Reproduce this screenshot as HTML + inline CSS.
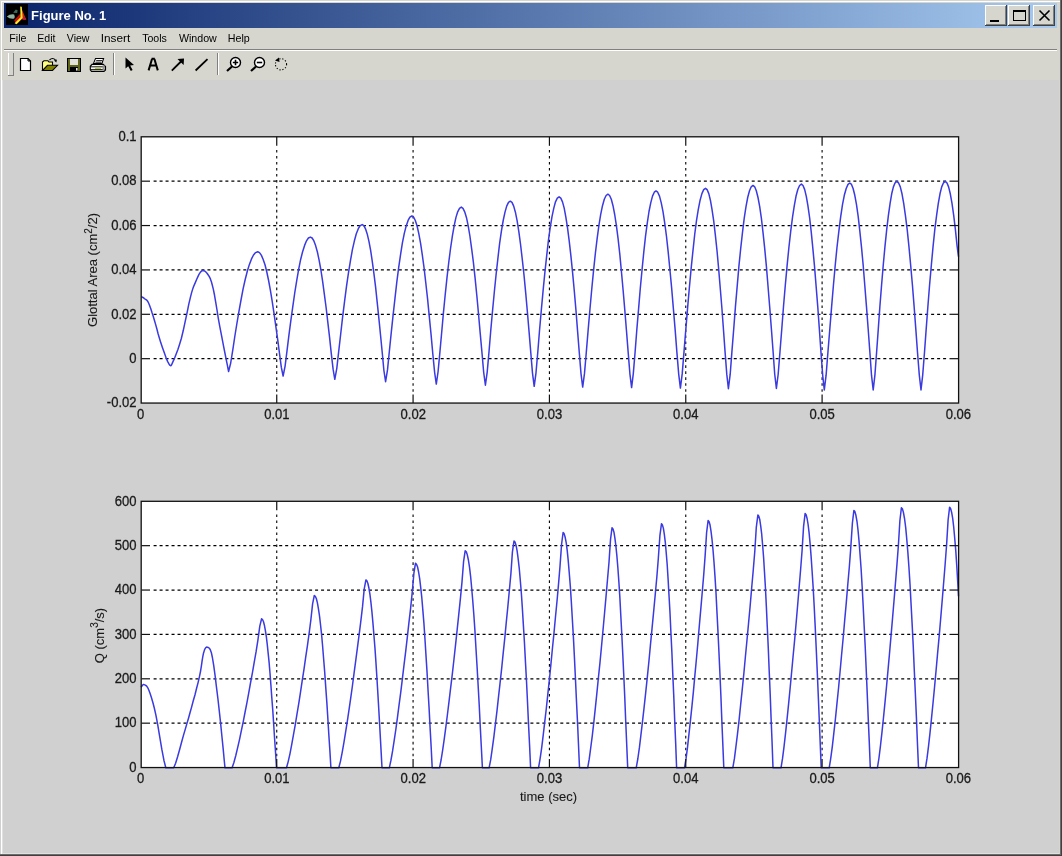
<!DOCTYPE html>
<html><head><meta charset="utf-8"><style>
html,body{margin:0;padding:0;width:1062px;height:856px;overflow:hidden;background:#d0d0d0}
svg{display:block;will-change:transform}
text{font-family:"Liberation Sans",sans-serif}
.tx text{font-size:13px;fill:#1a1a1a;stroke:#1a1a1a;stroke-width:0.1}
.tx text.d{font-size:14.5px;fill:#1a1a1a;stroke:#1a1a1a;stroke-width:0.3}
.g{stroke:#000;stroke-width:1.1;stroke-dasharray:2.6 3.381}
.gh{stroke:#000;stroke-width:1.15;stroke-dasharray:3 2.981}
.k{stroke:#111;stroke-width:1.2}
.box{fill:none;stroke:#111;stroke-width:1.3}
.ln{fill:none;stroke:#3a3ae0;stroke-width:1.5;stroke-linejoin:round}
</style></head><body>
<svg width="1062" height="856" viewBox="0 0 1062 856">
<rect x="0" y="0" width="1062" height="856" fill="#d6d6ce"/><rect x="1" y="1" width="1059" height="853" fill="#ffffff"/><rect x="2" y="2" width="1058" height="852" fill="#d6d6ce"/><rect x="0" y="854" width="1062" height="1" fill="#6c6c6c"/><rect x="0" y="855" width="1062" height="1" fill="#404040"/><rect x="1060" y="0" width="1" height="855" fill="#6c6c6c"/><rect x="1061" y="0" width="1" height="856" fill="#404040"/><defs><linearGradient id="tg" x1="0" x2="1" y1="0" y2="0"><stop offset="0" stop-color="#0a246a"/><stop offset="1" stop-color="#a6caf0"/></linearGradient></defs><rect x="4" y="3" width="1053" height="25" fill="url(#tg)"/><rect x="6" y="4" width="22" height="21" fill="#000"/><path d="M6.8 16.6 Q10 13.6 14.2 14.4 Q15.2 16.5 14.2 18.6 Q10 19.4 6.8 16.6 Z" fill="#8db3a0"/><path d="M13.2 12.8 L15.8 9.6 L17.6 10.2 L17.2 13 Z" fill="#3f6a58"/><polygon points="14.2,20.2 20.6,13.2 21.8,19.2 16.2,24" fill="#c41200"/><polygon points="21.2,8 26.2,19.4 22.2,19.6" fill="#d83000"/><polygon points="23.6,15.6 26.4,19.8 23.2,20" fill="#b01850"/><path d="M20.2 6.4 L21.8 6.8 L22.6 18 L16.6 24.2 L14.6 23.2 L20.6 17.2 Z" fill="#ffe82a"/><text x="31.1" y="19.6" font-size="13" font-weight="bold" fill="#fff" class="ui">Figure No. 1</text><rect x="985" y="5" width="22" height="21" fill="#404040"/><rect x="985" y="5" width="21" height="20" fill="#fff"/><rect x="986" y="6" width="20" height="19" fill="#808080"/><rect x="986" y="6" width="19" height="18" fill="#d6d6ce"/><rect x="1008" y="5" width="22" height="21" fill="#404040"/><rect x="1008" y="5" width="21" height="20" fill="#fff"/><rect x="1009" y="6" width="20" height="19" fill="#808080"/><rect x="1009" y="6" width="19" height="18" fill="#d6d6ce"/><rect x="1033" y="5" width="22" height="21" fill="#404040"/><rect x="1033" y="5" width="21" height="20" fill="#fff"/><rect x="1034" y="6" width="20" height="19" fill="#808080"/><rect x="1034" y="6" width="19" height="18" fill="#d6d6ce"/><rect x="990" y="20" width="9" height="2" fill="#000"/><rect x="1013.5" y="10.5" width="12" height="10" fill="none" stroke="#000" stroke-width="1"/><rect x="1013" y="10" width="13" height="2" fill="#000"/><path d="M1039.5 10.5 L1049.5 20.5 M1049.5 10.5 L1039.5 20.5" stroke="#000" stroke-width="1.6"/><text x="9.3" y="41.8" font-size="11" fill="#000" class="ui" textLength="17.2" lengthAdjust="spacingAndGlyphs">File</text><text x="37.3" y="41.8" font-size="11" fill="#000" class="ui" textLength="18.2" lengthAdjust="spacingAndGlyphs">Edit</text><text x="66.8" y="41.8" font-size="11" fill="#000" class="ui" textLength="22.7" lengthAdjust="spacingAndGlyphs">View</text><text x="100.7" y="41.8" font-size="11" fill="#000" class="ui" textLength="29.5" lengthAdjust="spacingAndGlyphs">Insert</text><text x="142.2" y="41.8" font-size="11" fill="#000" class="ui" textLength="24.7" lengthAdjust="spacingAndGlyphs">Tools</text><text x="178.9" y="41.8" font-size="11" fill="#000" class="ui" textLength="37.9" lengthAdjust="spacingAndGlyphs">Window</text><text x="227.8" y="41.8" font-size="11" fill="#000" class="ui" textLength="22.0" lengthAdjust="spacingAndGlyphs">Help</text><rect x="4" y="49" width="1053" height="1" fill="#808080"/><rect x="4" y="50" width="1053" height="1" fill="#ffffff"/><rect x="8" y="53" width="1" height="22" fill="#fff"/><rect x="9" y="53" width="4" height="22" fill="#d6d6ce"/><rect x="13" y="53" width="1" height="22" fill="#808080"/><rect x="8" y="75" width="6" height="1" fill="#808080"/><rect x="113" y="53" width="1" height="22" fill="#808080"/><rect x="114" y="53" width="1" height="22" fill="#fff"/><rect x="217" y="53" width="1" height="22" fill="#808080"/><rect x="218" y="53" width="1" height="22" fill="#fff"/><path d="M20.5 58.5 H28 L30.5 61 V70.5 H20.5 Z" fill="#fff" stroke="#000" stroke-width="1.2"/><path d="M28 58.5 V61 H30.5" fill="none" stroke="#000" stroke-width="1"/><path d="M42.5 70.5 V62 L44 60.8 H48 L49 62 H52.5 V65.2" fill="#ffff80" stroke="#000" stroke-width="1.1"/><path d="M42.5 70.5 L47.5 65.3 H57.5 L52.5 70.5 Z" fill="#808000" stroke="#000" stroke-width="1.1"/><path d="M49.5 60 Q52.5 57 55.5 60" fill="none" stroke="#000" stroke-width="1.1"/><path d="M54 60.5 L57 59.5 L56.3 62.5 Z" fill="#000"/><rect x="67" y="58" width="14" height="14" fill="#000"/><rect x="68" y="59" width="12" height="12" fill="#5e6418"/><rect x="70" y="59" width="8" height="6" fill="#e2e2da"/><rect x="70" y="67" width="8" height="4" fill="#000"/><rect x="76" y="68" width="1.6" height="2.6" fill="#e8e8e8"/><path d="M95.5 58.5 H103.6 L101.9 63.6 H93.4 Z" fill="#fff" stroke="#000" stroke-width="1.05"/><path d="M96.2 60.6 H102.2 M95.4 62.2 H101.4" stroke="#000" stroke-width="0.9"/><path d="M92 64.3 H103.2 L105.5 66.4 V70 L104 71.3 H91.5 L90.3 69.8 V66.3 Z" fill="#f4f4ee" stroke="#000" stroke-width="1.15"/><path d="M90.8 66.8 H104.8 M90.8 69.6 H104.8" stroke="#000" stroke-width="0.9"/><rect x="95" y="67.6" width="6" height="1.3" fill="#a8c040"/><rect x="102.6" y="65.2" width="2" height="5.2" fill="#909090"/><path d="M125.5 57.5 L125.5 68.5 L128.2 66.2 L130.8 71 L132.6 70 L130.2 65.4 L134 65 Z" fill="#000"/><path d="M148.6 70.4 L152 59 M157.8 70.4 L154.4 59 M151.6 58.8 H154.8 M150 65.4 H156.6" stroke="#000" stroke-width="2" fill="none"/><path d="M171.8 70.6 L182 60.5" stroke="#000" stroke-width="1.8"/><path d="M184 58.5 L183.6 65 L177.5 59 Z" fill="#000"/><path d="M195.6 70.5 L207.5 59.2" stroke="#000" stroke-width="1.8"/><circle cx="235.5" cy="62.5" r="5" fill="#fff" stroke="#000" stroke-width="1.4"/><path d="M232 66.5 L227 71" stroke="#000" stroke-width="2.2"/><path d="M232.8 62.5 H238.2 M235.5 59.8 V65.2" stroke="#000" stroke-width="1.6"/><circle cx="259.5" cy="62.5" r="5" fill="#fff" stroke="#000" stroke-width="1.4"/><path d="M256 66.5 L251 71" stroke="#000" stroke-width="2.2"/><path d="M256.8 62.5 H262.2" stroke="#000" stroke-width="1.6"/><circle cx="281" cy="64.3" r="5.6" fill="none" stroke="#000" stroke-width="1.1" stroke-dasharray="1.2 1.8"/><path d="M275 60.5 L279 57.5 L279.5 62 Z" fill="#000"/><rect x="0" y="80" width="1" height="774" fill="#d0d0d0"/><rect x="2" y="80" width="1057" height="774" fill="#e0e0e0"/><rect x="3" y="80" width="1056" height="773" fill="#d0d0d0"/>
<rect x="141" y="137" width="817" height="266" fill="#fff"/><rect x="141" y="501" width="817" height="266" fill="#fff"/><line x1="276.74" y1="150.00" x2="276.74" y2="395" class="g"/><line x1="413.08" y1="150.00" x2="413.08" y2="395" class="g"/><line x1="549.42" y1="150.00" x2="549.42" y2="395" class="g"/><line x1="685.76" y1="150.00" x2="685.76" y2="395" class="g"/><line x1="822.10" y1="150.00" x2="822.10" y2="395" class="g"/><line x1="153.60" y1="181.18" x2="949" y2="181.18" class="gh"/><line x1="153.60" y1="225.55" x2="949" y2="225.55" class="gh"/><line x1="153.60" y1="269.93" x2="949" y2="269.93" class="gh"/><line x1="153.60" y1="314.30" x2="949" y2="314.30" class="gh"/><line x1="153.60" y1="358.68" x2="949" y2="358.68" class="gh"/><line x1="276.74" y1="514.50" x2="276.74" y2="759" class="g"/><line x1="413.08" y1="514.50" x2="413.08" y2="759" class="g"/><line x1="549.42" y1="514.50" x2="549.42" y2="759" class="g"/><line x1="685.76" y1="514.50" x2="685.76" y2="759" class="g"/><line x1="822.10" y1="514.50" x2="822.10" y2="759" class="g"/><line x1="153.60" y1="545.67" x2="949" y2="545.67" class="gh"/><line x1="153.60" y1="590.05" x2="949" y2="590.05" class="gh"/><line x1="153.60" y1="634.42" x2="949" y2="634.42" class="gh"/><line x1="153.60" y1="678.80" x2="949" y2="678.80" class="gh"/><line x1="153.60" y1="723.17" x2="949" y2="723.17" class="gh"/><path d="M141.3 296.5 L141.7 296.7 L142.3 297.1 L143.0 297.5 L143.8 298.0 L144.5 298.6 L145.2 299.1 L146.0 299.6 L146.8 300.2 L147.7 301.3 L148.6 303.0 L149.6 305.5 L150.8 308.7 L151.9 312.3 L153.2 316.2 L154.4 320.2 L155.6 324.4 L156.9 329.0 L158.1 333.8 L159.5 338.5 L160.9 343.1 L162.5 347.8 L164.3 352.8 L166.0 357.6 L167.7 361.6 L169.1 364.2 L170.1 365.4 L170.8 365.7 L171.5 364.9 L172.2 363.4 L173.2 361.1 L174.6 358.1 L176.1 354.2 L177.9 349.6 L179.6 344.2 L181.4 338.2 L183.2 330.8 L185.1 321.9 L187.1 312.6 L188.8 304.1 L190.4 297.3 L191.6 292.6 L192.6 289.4 L193.4 287.0 L194.3 284.9 L195.3 282.6 L196.5 279.8 L197.8 276.9 L199.1 274.2 L200.5 272.1 L201.8 270.8 L203.1 270.5 L204.5 270.9 L205.9 272.0 L207.2 273.5 L208.4 275.2 L209.5 277.0 L210.4 278.9 L211.3 281.4 L212.2 284.7 L213.3 289.1 L214.5 295.0 L215.7 302.1 L217.0 310.0 L218.3 318.3 L219.8 326.7 L221.6 335.9 L223.6 346.3 L225.6 356.5 L227.4 365.3 L228.6 371.5 L230.7 363.0 L232.8 349.8 L234.8 336.5 L236.9 323.5 L239.0 311.1 L241.1 299.5 L243.1 288.9 L245.2 279.5 L247.3 271.2 L249.4 264.4 L251.5 258.9 L253.5 255.0 L255.6 252.6 L257.7 251.8 L259.5 252.6 L261.3 255.1 L263.1 259.2 L265.0 264.8 L266.8 272.0 L268.6 280.5 L270.4 290.3 L272.2 301.3 L274.0 313.3 L275.8 326.1 L277.7 339.6 L279.5 353.5 L281.3 367.2 L283.1 376.0 L285.1 366.1 L287.0 350.9 L288.9 335.3 L290.9 320.2 L292.9 305.9 L294.8 292.5 L296.8 280.2 L298.7 269.2 L300.6 259.7 L302.6 251.7 L304.6 245.4 L306.5 240.8 L308.4 238.0 L310.4 237.1 L312.1 238.0 L313.9 240.9 L315.6 245.6 L317.4 252.0 L319.1 260.2 L320.9 270.0 L322.6 281.2 L324.3 293.8 L326.1 307.5 L327.8 322.2 L329.6 337.7 L331.3 353.6 L333.1 369.2 L334.8 379.3 L336.8 368.3 L338.7 351.3 L340.7 334.0 L342.6 317.2 L344.6 301.2 L346.5 286.3 L348.5 272.6 L350.5 260.4 L352.4 249.7 L354.4 240.8 L356.3 233.8 L358.3 228.7 L360.2 225.6 L362.2 224.6 L363.9 225.6 L365.5 228.8 L367.2 233.9 L368.9 241.1 L370.6 250.1 L372.2 260.9 L373.9 273.3 L375.6 287.2 L377.2 302.4 L378.9 318.6 L380.6 335.7 L382.3 353.3 L383.9 370.5 L385.6 381.7 L387.5 369.9 L389.3 351.7 L391.2 333.2 L393.1 315.2 L395.0 298.1 L396.8 282.1 L398.7 267.4 L400.6 254.3 L402.4 242.9 L404.3 233.4 L406.2 225.9 L408.1 220.4 L409.9 217.1 L411.8 216.0 L413.6 217.1 L415.3 220.5 L417.1 226.0 L418.8 233.6 L420.6 243.3 L422.3 254.9 L424.1 268.1 L425.8 283.0 L427.6 299.2 L429.3 316.6 L431.1 334.9 L432.8 353.7 L434.6 372.1 L436.3 384.1 L438.1 371.5 L439.9 352.1 L441.7 332.3 L443.4 313.1 L445.2 294.8 L447.0 277.7 L448.8 262.0 L450.6 248.0 L452.4 235.8 L454.2 225.7 L455.9 217.6 L457.7 211.8 L459.5 208.3 L461.3 207.1 L463.0 208.3 L464.7 211.8 L466.5 217.7 L468.2 225.8 L469.9 236.0 L471.6 248.3 L473.4 262.3 L475.1 278.1 L476.8 295.3 L478.5 313.7 L480.2 333.1 L482.0 353.0 L483.7 372.5 L485.4 385.2 L487.2 372.1 L489.0 351.9 L490.7 331.3 L492.5 311.3 L494.3 292.3 L496.1 274.5 L497.9 258.3 L499.6 243.7 L501.4 231.1 L503.2 220.5 L505.0 212.1 L506.7 206.1 L508.5 202.4 L510.3 201.2 L512.0 202.4 L513.7 206.1 L515.4 212.2 L517.1 220.6 L518.8 231.3 L520.5 244.0 L522.2 258.6 L524.0 275.0 L525.7 292.9 L527.4 312.0 L529.1 332.1 L530.8 352.8 L532.5 373.1 L534.2 386.3 L536.0 372.8 L537.8 352.0 L539.5 330.8 L541.3 310.2 L543.1 290.6 L544.9 272.3 L546.7 255.6 L548.4 240.6 L550.2 227.6 L552.0 216.7 L553.8 208.1 L555.5 201.8 L557.3 198.1 L559.1 196.8 L560.8 198.1 L562.5 201.9 L564.2 208.1 L565.8 216.8 L567.5 227.7 L569.2 240.8 L570.9 255.8 L572.6 272.7 L574.3 291.0 L576.0 310.7 L577.6 331.4 L579.3 352.7 L581.0 373.6 L582.7 387.1 L584.5 373.4 L586.3 352.2 L588.1 330.6 L589.9 309.7 L591.7 289.7 L593.5 271.1 L595.3 254.0 L597.1 238.8 L598.9 225.5 L600.7 214.4 L602.5 205.7 L604.3 199.3 L606.1 195.5 L607.9 194.2 L609.6 195.5 L611.3 199.3 L613.0 205.7 L614.7 214.5 L616.4 225.6 L618.1 238.9 L619.8 254.2 L621.4 271.3 L623.1 290.0 L624.8 310.0 L626.5 331.0 L628.2 352.6 L629.9 373.8 L631.6 387.6 L633.3 373.6 L635.1 352.0 L636.8 330.0 L638.6 308.6 L640.3 288.3 L642.1 269.3 L643.8 251.9 L645.5 236.4 L647.3 222.8 L649.0 211.5 L650.8 202.6 L652.5 196.1 L654.3 192.2 L656.0 190.9 L657.7 192.2 L659.5 196.1 L661.2 202.6 L663.0 211.6 L664.7 222.9 L666.5 236.5 L668.2 252.1 L669.9 269.5 L671.7 288.6 L673.4 308.9 L675.2 330.4 L676.9 352.4 L678.7 374.1 L680.4 388.1 L682.2 373.9 L684.0 351.9 L685.8 329.6 L687.6 307.9 L689.4 287.2 L691.2 267.9 L693.0 250.3 L694.7 234.5 L696.5 220.7 L698.3 209.3 L700.1 200.2 L701.9 193.6 L703.7 189.6 L705.5 188.3 L707.1 189.6 L708.8 193.6 L710.4 200.2 L712.0 209.3 L713.7 220.8 L715.3 234.6 L717.0 250.5 L718.6 268.2 L720.2 287.5 L721.9 308.3 L723.5 330.0 L725.1 352.4 L726.8 374.4 L728.4 388.7 L730.2 374.2 L731.9 351.9 L733.7 329.2 L735.4 307.1 L737.2 286.1 L738.9 266.4 L740.7 248.5 L742.5 232.4 L744.2 218.4 L746.0 206.7 L747.7 197.5 L749.5 190.8 L751.2 186.8 L753.0 185.4 L754.7 186.8 L756.3 190.8 L758.0 197.5 L759.7 206.7 L761.4 218.4 L763.0 232.3 L764.7 248.4 L766.4 266.4 L768.0 286.0 L769.7 307.0 L771.4 329.0 L773.1 351.7 L774.7 374.0 L776.4 388.5 L778.2 374.0 L780.0 351.5 L781.8 328.7 L783.5 306.5 L785.3 285.3 L787.1 265.6 L788.9 247.5 L790.7 231.3 L792.5 217.3 L794.3 205.6 L796.0 196.3 L797.8 189.5 L799.6 185.5 L801.4 184.1 L803.0 185.5 L804.7 189.6 L806.3 196.3 L807.9 205.7 L809.6 217.5 L811.2 231.7 L812.8 247.9 L814.5 266.1 L816.1 286.0 L817.8 307.3 L819.4 329.7 L821.0 352.6 L822.7 375.3 L824.3 389.9 L826.1 375.2 L827.9 352.5 L829.8 329.3 L831.6 306.9 L833.4 285.5 L835.2 265.5 L837.0 247.2 L838.9 230.8 L840.7 216.6 L842.5 204.7 L844.3 195.3 L846.2 188.5 L848.0 184.4 L849.8 183.0 L851.5 184.4 L853.1 188.5 L854.8 195.3 L856.5 204.7 L858.2 216.6 L859.8 230.8 L861.5 247.2 L863.2 265.5 L864.8 285.5 L866.5 306.9 L868.2 329.3 L869.9 352.5 L871.5 375.2 L873.2 389.9 L874.9 375.1 L876.6 352.2 L878.3 328.9 L879.9 306.2 L881.6 284.7 L883.3 264.5 L885.0 246.1 L886.7 229.6 L888.4 215.3 L890.1 203.3 L891.7 193.8 L893.4 186.9 L895.1 182.8 L896.8 181.4 L898.5 182.8 L900.3 186.9 L902.0 193.8 L903.7 203.3 L905.4 215.3 L907.2 229.6 L908.9 246.1 L910.6 264.5 L912.4 284.7 L914.1 306.2 L915.8 328.9 L917.5 352.2 L919.3 375.1 L921.0 389.9 L922.7 375.1 L924.5 352.2 L926.2 328.9 L927.9 306.2 L929.6 284.7 L931.4 264.5 L933.1 246.1 L934.8 229.6 L936.6 215.3 L938.3 203.3 L940.0 193.8 L941.7 186.9 L943.5 182.8 L945.2 181.4 L946.9 182.8 L948.6 186.9 L950.3 193.8 L952.0 203.3 L953.7 215.3 L955.4 229.6 L957.1 246.1 L958.5 256.7" class="ln"/><path d="M141.0 687.3 L141.4 686.8 L141.9 686.0 L142.5 685.2 L143.2 684.6 L144.0 684.6 L144.8 684.9 L145.7 685.4 L146.7 686.2 L147.8 687.8 L148.9 690.3 L150.1 693.6 L151.4 697.5 L152.8 702.3 L154.3 708.0 L155.9 715.1 L157.7 724.7 L159.7 736.7 L161.8 749.2 L163.9 760.2 L165.8 767.8 L167.5 767.8 L169.0 767.8 L170.5 767.8 L172.0 767.8 L173.7 767.8 L175.6 763.2 L177.6 756.8 L179.7 749.3 L181.7 741.7 L183.6 734.9 L185.3 729.1 L186.9 723.6 L188.5 718.2 L190.0 712.8 L191.6 707.1 L193.2 701.0 L195.0 694.7 L196.6 688.3 L198.2 682.1 L199.5 676.4 L200.6 671.0 L201.4 665.8 L202.1 660.9 L202.8 656.6 L203.5 653.2 L204.3 650.6 L205.0 648.8 L205.8 647.6 L206.6 647.1 L207.4 647.2 L208.3 647.5 L209.2 648.1 L210.2 649.5 L211.3 652.4 L212.4 657.5 L213.7 665.4 L215.1 675.7 L216.5 687.4 L218.0 699.5 L219.3 711.1 L220.6 723.1 L221.9 736.3 L223.2 749.1 L224.2 760.0 L225.0 767.8 L232.1 767.8 L233.9 762.5 L235.8 755.5 L237.6 747.8 L239.5 739.6 L241.3 730.9 L243.2 721.9 L245.0 712.5 L246.9 702.9 L248.7 693.1 L250.5 683.0 L252.4 672.8 L254.2 662.3 L256.1 651.7 L257.9 640.2 L259.8 626.1 L261.6 618.8 L262.5 619.5 L263.5 621.7 L264.4 625.2 L265.3 630.1 L266.3 636.4 L267.2 643.9 L268.1 652.6 L269.1 662.4 L270.0 673.3 L270.9 685.0 L271.8 697.6 L272.8 710.8 L273.7 724.5 L274.6 738.7 L275.6 753.2 L276.5 767.8 L286.5 767.8 L288.2 761.6 L290.0 753.6 L291.7 744.7 L293.4 735.2 L295.2 725.1 L296.9 714.7 L298.7 703.9 L300.4 692.8 L302.1 681.4 L303.9 669.8 L305.6 657.9 L307.4 645.8 L309.1 633.5 L310.8 620.3 L312.6 603.9 L314.3 595.5 L315.3 596.3 L316.4 598.8 L317.4 602.9 L318.4 608.6 L319.5 615.8 L320.5 624.5 L321.6 634.6 L322.6 646.0 L323.6 658.5 L324.7 672.1 L325.7 686.6 L326.8 701.9 L327.8 717.8 L328.8 734.2 L329.9 750.9 L330.9 767.8 L338.8 767.8 L340.5 761.1 L342.2 752.3 L343.9 742.6 L345.6 732.2 L347.3 721.3 L349.0 709.9 L350.7 698.1 L352.4 686.0 L354.0 673.6 L355.7 660.9 L357.4 647.9 L359.1 634.8 L360.8 621.3 L362.5 606.9 L364.2 589.1 L365.9 579.9 L366.9 580.8 L367.9 583.5 L368.9 588.0 L369.9 594.2 L370.9 602.1 L371.9 611.6 L372.9 622.6 L373.9 634.9 L375.0 648.6 L376.0 663.4 L377.0 679.2 L378.0 695.9 L379.0 713.3 L380.0 731.1 L381.0 749.4 L382.0 767.8 L389.3 767.8 L390.9 760.5 L392.6 750.9 L394.2 740.4 L395.9 729.0 L397.5 717.1 L399.1 704.7 L400.8 691.9 L402.4 678.7 L404.0 665.2 L405.7 651.4 L407.3 637.3 L408.9 622.9 L410.6 608.3 L412.2 592.6 L413.9 573.2 L415.5 563.2 L416.5 564.2 L417.6 567.1 L418.6 572.0 L419.7 578.8 L420.7 587.4 L421.8 597.7 L422.8 609.6 L423.9 623.1 L424.9 638.0 L425.9 654.1 L427.0 671.4 L428.0 689.5 L429.1 708.4 L430.1 727.9 L431.2 747.7 L432.2 767.8 L439.5 767.8 L441.1 760.0 L442.7 749.9 L444.3 738.7 L445.9 726.7 L447.5 714.0 L449.1 700.9 L450.7 687.3 L452.4 673.3 L454.0 659.0 L455.6 644.3 L457.2 629.3 L458.8 614.1 L460.4 598.6 L462.0 581.9 L463.6 561.3 L465.2 550.7 L466.3 551.7 L467.3 554.9 L468.4 560.0 L469.5 567.2 L470.6 576.3 L471.6 587.3 L472.7 600.0 L473.8 614.3 L474.9 630.1 L475.9 647.2 L477.0 665.5 L478.1 684.7 L479.2 704.8 L480.2 725.4 L481.3 746.5 L482.4 767.8 L489.1 767.8 L490.7 759.7 L492.2 749.1 L493.8 737.4 L495.3 724.8 L496.9 711.6 L498.4 697.9 L500.0 683.7 L501.6 669.1 L503.1 654.1 L504.7 638.8 L506.2 623.1 L507.8 607.2 L509.3 591.0 L510.9 573.6 L512.4 552.1 L514.0 541.0 L515.0 542.1 L516.1 545.4 L517.1 550.8 L518.1 558.3 L519.2 567.8 L520.2 579.2 L521.3 592.5 L522.3 607.4 L523.3 623.9 L524.4 641.8 L525.4 660.9 L526.5 681.0 L527.5 702.0 L528.5 723.6 L529.6 745.6 L530.6 767.8 L538.5 767.8 L540.0 759.4 L541.6 748.4 L543.1 736.2 L544.6 723.2 L546.2 709.5 L547.7 695.3 L549.3 680.5 L550.8 665.4 L552.3 649.8 L553.9 633.9 L555.4 617.7 L557.0 601.2 L558.5 584.4 L560.0 566.4 L561.6 544.0 L563.1 532.5 L564.1 533.6 L565.1 537.0 L566.2 542.6 L567.2 550.4 L568.2 560.3 L569.2 572.2 L570.3 585.9 L571.3 601.4 L572.3 618.5 L573.4 637.1 L574.4 656.9 L575.4 677.8 L576.4 699.5 L577.5 721.9 L578.5 744.7 L579.5 767.8 L587.7 767.8 L589.2 759.2 L590.7 748.0 L592.3 735.6 L593.8 722.3 L595.3 708.4 L596.8 693.8 L598.3 678.8 L599.9 663.3 L601.4 647.5 L602.9 631.3 L604.4 614.7 L605.9 597.9 L607.4 580.7 L609.0 562.3 L610.5 539.6 L612.0 527.8 L613.0 529.0 L614.0 532.4 L614.9 538.1 L615.9 546.1 L616.9 556.1 L617.9 568.2 L618.9 582.3 L619.9 598.1 L620.8 615.5 L621.8 634.5 L622.8 654.7 L623.8 676.0 L624.8 698.1 L625.7 721.0 L626.7 744.3 L627.7 767.8 L636.2 767.8 L637.8 759.0 L639.4 747.7 L640.9 735.1 L642.5 721.6 L644.1 707.4 L645.7 692.6 L647.3 677.3 L648.9 661.5 L650.4 645.4 L652.0 628.9 L653.6 612.1 L655.2 595.0 L656.8 577.5 L658.3 558.8 L659.9 535.7 L661.5 523.7 L662.4 524.9 L663.4 528.4 L664.3 534.2 L665.3 542.3 L666.2 552.5 L667.2 564.8 L668.1 579.1 L669.0 595.2 L670.0 612.9 L670.9 632.2 L671.9 652.7 L672.8 674.4 L673.8 696.9 L674.7 720.2 L675.7 743.9 L676.6 767.8 L684.5 767.8 L686.0 758.9 L687.5 747.4 L688.9 734.6 L690.4 720.9 L691.9 706.6 L693.4 691.6 L694.8 676.1 L696.3 660.2 L697.8 643.8 L699.2 627.1 L700.7 610.1 L702.2 592.7 L703.7 575.0 L705.1 556.1 L706.6 532.6 L708.1 520.5 L709.1 521.7 L710.1 525.3 L711.0 531.1 L712.0 539.3 L713.0 549.7 L714.0 562.2 L715.0 576.6 L716.0 592.9 L716.9 610.9 L717.9 630.4 L718.9 651.2 L719.9 673.2 L720.9 696.0 L721.8 719.6 L722.8 743.6 L723.8 767.8 L732.8 767.8 L734.4 758.7 L735.9 746.9 L737.5 733.9 L739.1 719.9 L740.6 705.2 L742.2 689.9 L743.8 674.0 L745.3 657.7 L746.9 641.0 L748.5 623.9 L750.1 606.5 L751.6 588.7 L753.2 570.7 L754.8 551.3 L756.3 527.3 L757.9 514.9 L758.8 516.1 L759.8 519.8 L760.7 525.8 L761.7 534.2 L762.6 544.8 L763.6 557.5 L764.5 572.3 L765.5 589.0 L766.4 607.4 L767.3 627.3 L768.3 648.6 L769.2 671.0 L770.2 694.4 L771.1 718.5 L772.1 743.0 L773.0 767.8 L781.0 767.8 L782.5 758.7 L784.0 746.8 L785.5 733.7 L787.0 719.6 L788.5 704.9 L790.0 689.5 L791.5 673.5 L793.0 657.2 L794.6 640.4 L796.1 623.2 L797.6 605.7 L799.1 587.8 L800.6 569.7 L802.1 550.2 L803.6 526.1 L805.1 513.6 L806.1 514.8 L807.1 518.5 L808.1 524.5 L809.1 532.9 L810.1 543.6 L811.1 556.4 L812.1 571.3 L813.2 588.1 L814.2 606.5 L815.2 626.6 L816.2 648.0 L817.2 670.5 L818.2 694.0 L819.2 718.2 L820.2 742.9 L821.2 767.8 L829.2 767.8 L830.7 758.6 L832.3 746.6 L833.8 733.3 L835.4 719.0 L836.9 704.1 L838.5 688.5 L840.0 672.3 L841.5 655.8 L843.1 638.8 L844.6 621.4 L846.2 603.6 L847.7 585.5 L849.3 567.2 L850.8 547.4 L852.4 523.0 L853.9 510.4 L854.9 511.6 L855.9 515.3 L857.0 521.5 L858.0 530.0 L859.0 540.8 L860.0 553.8 L861.1 568.8 L862.1 585.8 L863.1 604.5 L864.1 624.8 L865.2 646.5 L866.2 669.3 L867.2 693.1 L868.2 717.6 L869.3 742.6 L870.3 767.8 L877.4 767.8 L878.9 758.5 L880.4 746.4 L881.9 732.9 L883.4 718.5 L884.9 703.4 L886.4 687.7 L887.9 671.4 L889.4 654.6 L890.9 637.4 L892.4 619.9 L893.9 602.0 L895.4 583.7 L896.9 565.1 L898.4 545.2 L899.9 520.5 L901.4 507.8 L902.5 509.1 L903.5 512.8 L904.6 519.0 L905.7 527.6 L906.7 538.5 L907.8 551.6 L908.9 566.8 L910.0 584.0 L911.0 602.9 L912.1 623.4 L913.2 645.2 L914.2 668.3 L915.3 692.3 L916.4 717.1 L917.4 742.3 L918.5 767.8 L925.5 767.8 L927.0 758.4 L928.5 746.3 L930.0 732.8 L931.5 718.4 L933.0 703.3 L934.5 687.5 L936.0 671.2 L937.5 654.4 L939.1 637.1 L940.6 619.5 L942.1 601.6 L943.6 583.3 L945.1 564.7 L946.6 544.7 L948.1 520.0 L949.6 507.2 L950.6 508.5 L951.6 512.2 L952.7 518.4 L953.7 527.0 L954.7 538.0 L955.8 551.1 L956.8 566.4 L957.8 583.5 L958.5 596.3" class="ln"/><line x1="276.74" y1="403.05" x2="276.74" y2="394.55" class="k"/><line x1="276.74" y1="136.80" x2="276.74" y2="145.80" class="k"/><line x1="413.08" y1="403.05" x2="413.08" y2="394.55" class="k"/><line x1="413.08" y1="136.80" x2="413.08" y2="145.80" class="k"/><line x1="549.42" y1="403.05" x2="549.42" y2="394.55" class="k"/><line x1="549.42" y1="136.80" x2="549.42" y2="145.80" class="k"/><line x1="685.76" y1="403.05" x2="685.76" y2="394.55" class="k"/><line x1="685.76" y1="136.80" x2="685.76" y2="145.80" class="k"/><line x1="822.10" y1="403.05" x2="822.10" y2="394.55" class="k"/><line x1="822.10" y1="136.80" x2="822.10" y2="145.80" class="k"/><line x1="141.50" y1="181.18" x2="150.00" y2="181.18" class="k"/><line x1="958.60" y1="181.18" x2="949.50" y2="181.18" class="k"/><line x1="141.50" y1="225.55" x2="150.00" y2="225.55" class="k"/><line x1="958.60" y1="225.55" x2="949.50" y2="225.55" class="k"/><line x1="141.50" y1="269.93" x2="150.00" y2="269.93" class="k"/><line x1="958.60" y1="269.93" x2="949.50" y2="269.93" class="k"/><line x1="141.50" y1="314.30" x2="150.00" y2="314.30" class="k"/><line x1="958.60" y1="314.30" x2="949.50" y2="314.30" class="k"/><line x1="141.50" y1="358.68" x2="150.00" y2="358.68" class="k"/><line x1="958.60" y1="358.68" x2="949.50" y2="358.68" class="k"/><rect x="141.20" y="136.80" width="817.40" height="266.25" class="box"/><line x1="276.74" y1="767.55" x2="276.74" y2="759.05" class="k"/><line x1="276.74" y1="501.30" x2="276.74" y2="510.30" class="k"/><line x1="413.08" y1="767.55" x2="413.08" y2="759.05" class="k"/><line x1="413.08" y1="501.30" x2="413.08" y2="510.30" class="k"/><line x1="549.42" y1="767.55" x2="549.42" y2="759.05" class="k"/><line x1="549.42" y1="501.30" x2="549.42" y2="510.30" class="k"/><line x1="685.76" y1="767.55" x2="685.76" y2="759.05" class="k"/><line x1="685.76" y1="501.30" x2="685.76" y2="510.30" class="k"/><line x1="822.10" y1="767.55" x2="822.10" y2="759.05" class="k"/><line x1="822.10" y1="501.30" x2="822.10" y2="510.30" class="k"/><line x1="141.50" y1="545.67" x2="150.00" y2="545.67" class="k"/><line x1="958.60" y1="545.67" x2="949.50" y2="545.67" class="k"/><line x1="141.50" y1="590.05" x2="150.00" y2="590.05" class="k"/><line x1="958.60" y1="590.05" x2="949.50" y2="590.05" class="k"/><line x1="141.50" y1="634.42" x2="150.00" y2="634.42" class="k"/><line x1="958.60" y1="634.42" x2="949.50" y2="634.42" class="k"/><line x1="141.50" y1="678.80" x2="150.00" y2="678.80" class="k"/><line x1="958.60" y1="678.80" x2="949.50" y2="678.80" class="k"/><line x1="141.50" y1="723.17" x2="150.00" y2="723.17" class="k"/><line x1="958.60" y1="723.17" x2="949.50" y2="723.17" class="k"/><rect x="141.20" y="501.30" width="817.40" height="266.25" class="box"/><g class="tx"><text transform="translate(136.6,141.00) scale(0.9,1)" text-anchor="end" class="d">0.1</text><text transform="translate(136.6,185.38) scale(0.9,1)" text-anchor="end" class="d">0.08</text><text transform="translate(136.6,229.75) scale(0.9,1)" text-anchor="end" class="d">0.06</text><text transform="translate(136.6,274.12) scale(0.9,1)" text-anchor="end" class="d">0.04</text><text transform="translate(136.6,318.50) scale(0.9,1)" text-anchor="end" class="d">0.02</text><text transform="translate(136.6,362.88) scale(0.9,1)" text-anchor="end" class="d">0</text><text transform="translate(136.6,407.25) scale(0.9,1)" text-anchor="end" class="d">-0.02</text><text transform="translate(140.60,418.75) scale(0.9,1)" text-anchor="middle" class="d">0</text><text transform="translate(276.90,418.75) scale(0.9,1)" text-anchor="middle" class="d">0.01</text><text transform="translate(413.20,418.75) scale(0.9,1)" text-anchor="middle" class="d">0.02</text><text transform="translate(549.50,418.75) scale(0.9,1)" text-anchor="middle" class="d">0.03</text><text transform="translate(685.80,418.75) scale(0.9,1)" text-anchor="middle" class="d">0.04</text><text transform="translate(822.10,418.75) scale(0.9,1)" text-anchor="middle" class="d">0.05</text><text transform="translate(958.40,418.75) scale(0.9,1)" text-anchor="middle" class="d">0.06</text><text transform="translate(136.6,505.50) scale(0.9,1)" text-anchor="end" class="d">600</text><text transform="translate(136.6,549.88) scale(0.9,1)" text-anchor="end" class="d">500</text><text transform="translate(136.6,594.25) scale(0.9,1)" text-anchor="end" class="d">400</text><text transform="translate(136.6,638.62) scale(0.9,1)" text-anchor="end" class="d">300</text><text transform="translate(136.6,683.00) scale(0.9,1)" text-anchor="end" class="d">200</text><text transform="translate(136.6,727.38) scale(0.9,1)" text-anchor="end" class="d">100</text><text transform="translate(136.6,771.75) scale(0.9,1)" text-anchor="end" class="d">0</text><text transform="translate(140.60,783.25) scale(0.9,1)" text-anchor="middle" class="d">0</text><text transform="translate(276.90,783.25) scale(0.9,1)" text-anchor="middle" class="d">0.01</text><text transform="translate(413.20,783.25) scale(0.9,1)" text-anchor="middle" class="d">0.02</text><text transform="translate(549.50,783.25) scale(0.9,1)" text-anchor="middle" class="d">0.03</text><text transform="translate(685.80,783.25) scale(0.9,1)" text-anchor="middle" class="d">0.04</text><text transform="translate(822.10,783.25) scale(0.9,1)" text-anchor="middle" class="d">0.05</text><text transform="translate(958.40,783.25) scale(0.9,1)" text-anchor="middle" class="d">0.06</text><text x="548.5" y="800.5" text-anchor="middle">time (sec)</text><text transform="translate(97.3,270) rotate(-90)" text-anchor="middle">Glottal Area (cm<tspan font-size="10" dy="-5.5">2</tspan><tspan dy="5.5">/2)</tspan></text><text transform="translate(103.8,635.5) rotate(-90)" text-anchor="middle">Q (cm<tspan font-size="10" dy="-5.5">3</tspan><tspan dy="5.5">/s)</tspan></text></g>
</svg>
</body></html>
